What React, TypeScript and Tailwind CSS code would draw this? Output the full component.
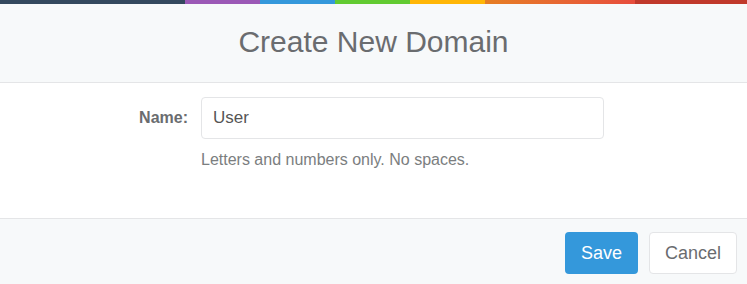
import React from "react";

export default function App() {
  return (
    <div className="w-[747px] h-[284px] flex flex-col bg-white overflow-hidden" style={{ fontFamily: '"Liberation Sans", Arial, sans-serif' }}>
      <div className="flex h-[4px] shrink-0">
        <div className="w-[185px] bg-[#34495e]" />
        <div className="w-[75px] bg-[#9b59b6]" />
        <div className="w-[75px] bg-[#3498db]" />
        <div className="w-[75px] bg-[#62cb31]" />
        <div className="w-[75px] bg-[#ffb606]" />
        <div className="w-[150px] bg-gradient-to-r from-[#e67e22] to-[#e74c3c]" />
        <div className="flex-1 bg-[#c0392b]" />
      </div>
      <div className="h-[79px] shrink-0 bg-[#f7f9fa] border-b border-[#e4e5e7] flex items-center justify-center">
        <h1 className="text-[30px] text-[#6a6c6f] font-normal mt-[-4px]">Create New Domain</h1>
      </div>
      <div className="h-[136px] shrink-0 border-b border-[#e4e5e7] pt-[14px]">
        <div className="flex items-center">
          <label className="w-[188px] text-right text-[16px] font-bold text-[#6a6c6f]">Name:</label>
          <div className="ml-[13px] w-[403px] h-[42px] border border-[#e4e5e7] rounded-[4px] flex items-center px-[11px] text-[17px] text-[#555]">
            User
          </div>
        </div>
        <div className="ml-[201px] mt-[9px] text-[16px] text-[#7b7e80]">Letters and numbers only. No spaces.</div>
      </div>
      <div className="flex-1 bg-[#f7f9fa] flex items-center justify-end pr-[10px] gap-[11px] pt-[3px]">
        <button className="h-[42px] w-[73px] bg-[#3498db] text-white text-[18px] rounded-[4px]">Save</button>
        <button className="h-[42px] w-[88px] bg-white border border-[#e4e5e7] text-[#6a6c6f] text-[18px] rounded-[4px]">Cancel</button>
      </div>
    </div>
  );
}
